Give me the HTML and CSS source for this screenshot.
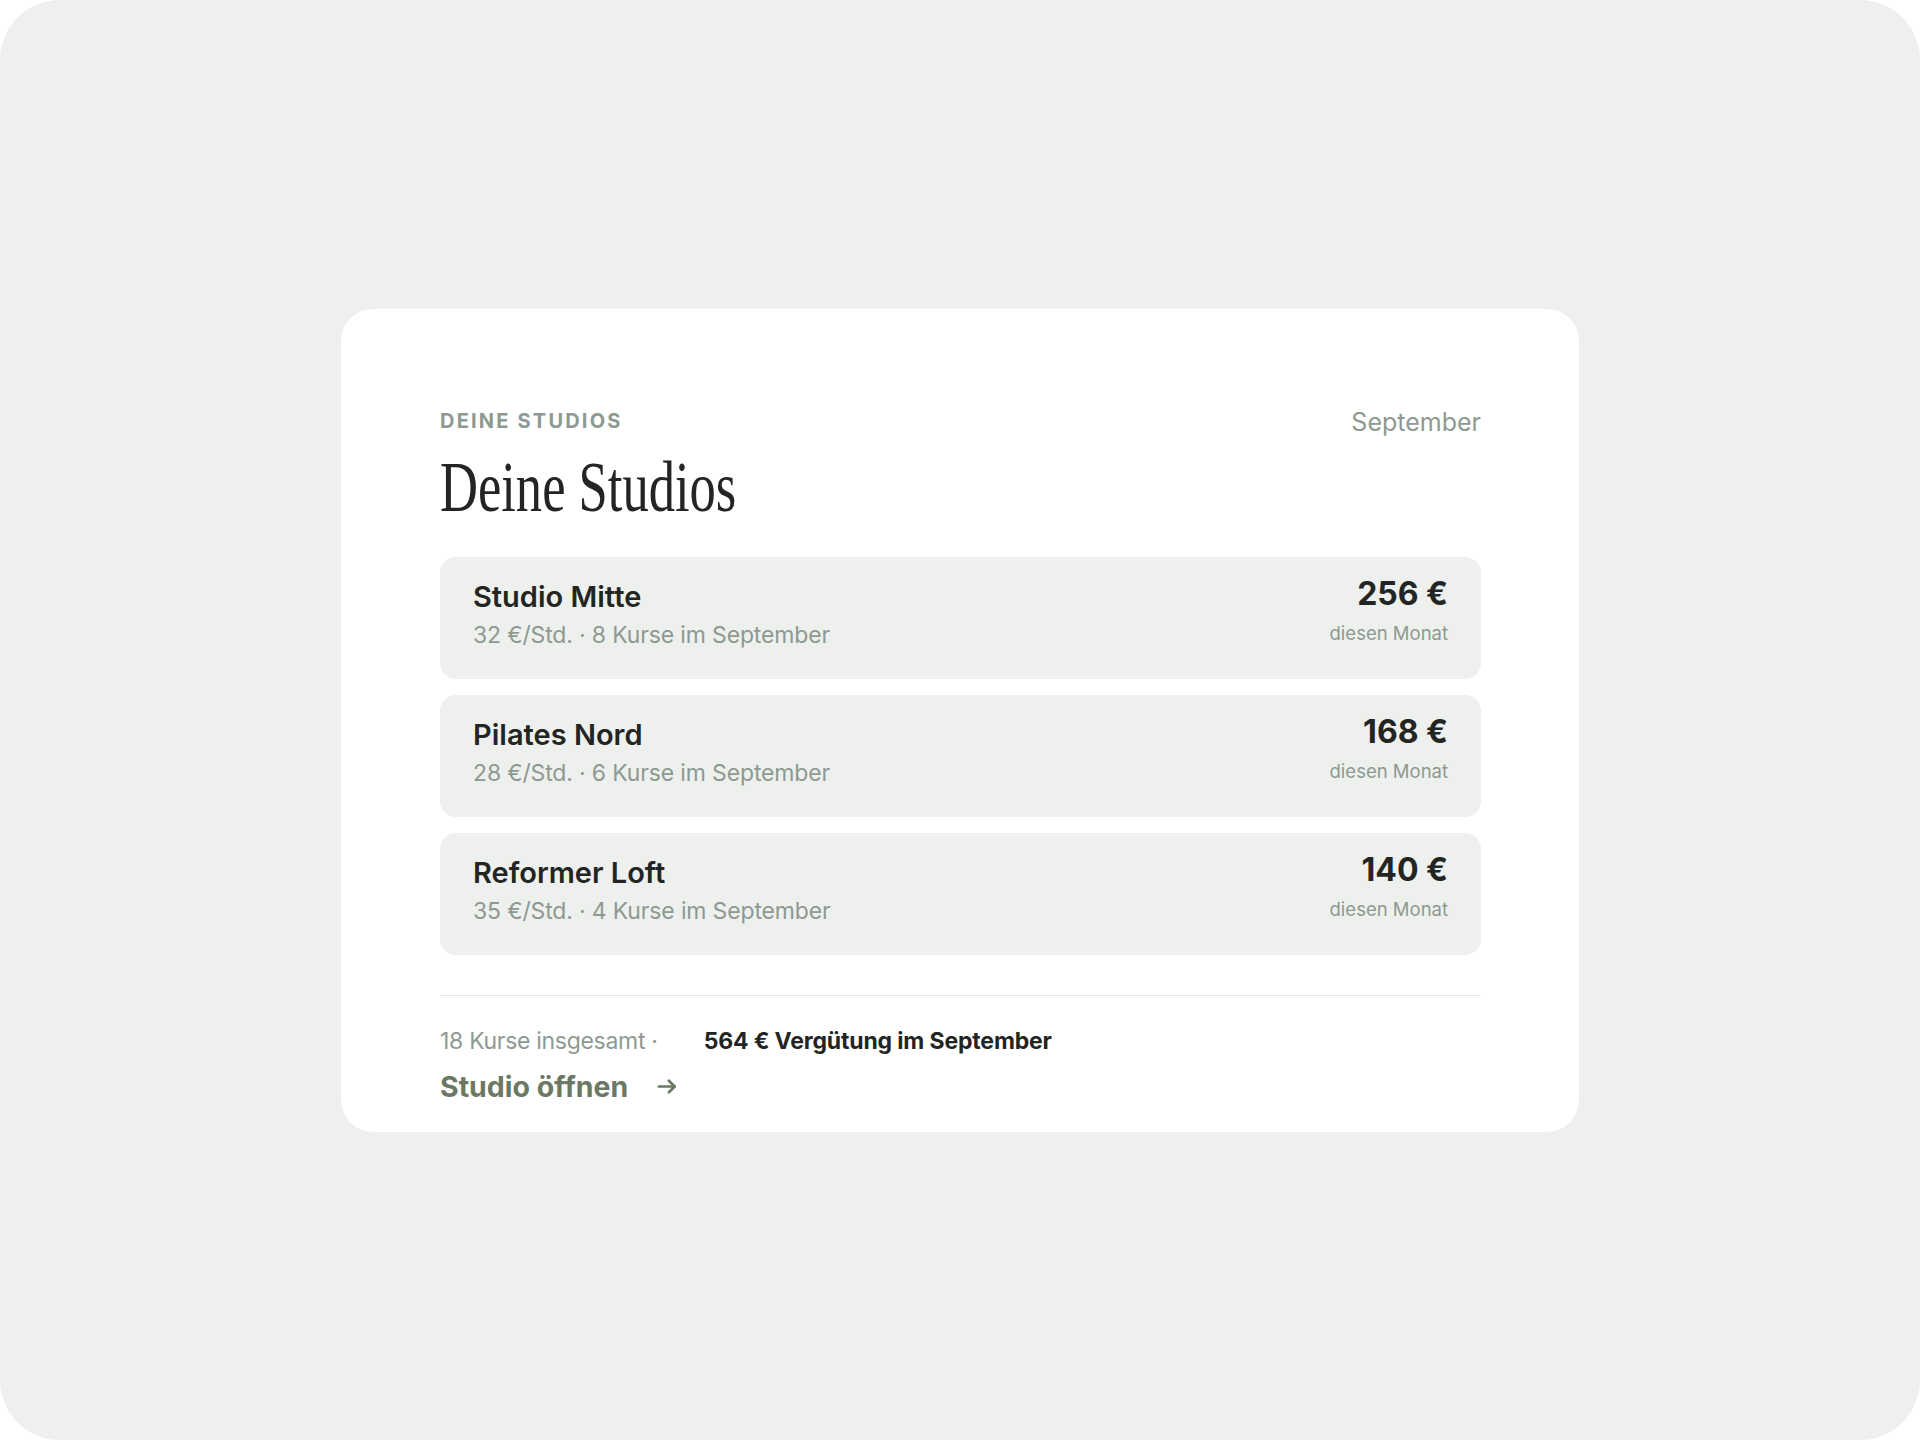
FILE: index.html
```html
<!DOCTYPE html>
<html lang="de">
<head>
<meta charset="utf-8">
<title>Deine Studios</title>
<link rel="stylesheet" href="styles.css">
</head>
<body>
<div class="frame">
  <section class="card">
    <header class="card-head">
      <div class="eyebrow">DEINE STUDIOS</div>
      <div class="month">September</div>
    </header>
    <h1 class="title">Deine Studios</h1>
    <ul class="studios">
      <li class="studio">
        <div class="studio-info">
          <div class="studio-name">Studio Mitte</div>
          <div class="studio-meta">32 €/Std. · 8 Kurse im September</div>
        </div>
        <div class="studio-sum">
          <div class="studio-amount">256 €</div>
          <div class="studio-period">diesen Monat</div>
        </div>
      </li>
      <li class="studio">
        <div class="studio-info">
          <div class="studio-name">Pilates Nord</div>
          <div class="studio-meta">28 €/Std. · 6 Kurse im September</div>
        </div>
        <div class="studio-sum">
          <div class="studio-amount">168 €</div>
          <div class="studio-period">diesen Monat</div>
        </div>
      </li>
      <li class="studio">
        <div class="studio-info">
          <div class="studio-name">Reformer Loft</div>
          <div class="studio-meta">35 €/Std. · 4 Kurse im September</div>
        </div>
        <div class="studio-sum">
          <div class="studio-amount">140 €</div>
          <div class="studio-period">diesen Monat</div>
        </div>
      </li>
    </ul>
    <footer class="card-foot">
      <div class="totals">
        <span class="totals-count">18 Kurse insgesamt ·</span>
        <span class="totals-pay">564 € Vergütung im September</span>
      </div>
      <a class="open-link" href="#">
        <span>Studio öffnen</span>
        <svg class="arrow" width="21" height="21" viewBox="0 0 20 20" fill="none" stroke="currentColor" stroke-width="2.6" stroke-linecap="round" stroke-linejoin="round"><path d="M1.8 10h15"/><path d="M11.3 4.5l5.5 5.5-5.5 5.5"/></svg>
      </a>
    </footer>
  </section>
</div>
</body>
</html>
```
FILE: styles.css
```css
* { box-sizing: border-box; }

html, body {
  margin: 0;
  padding: 0;
  background: #ffffff;
}

body {
  font-family: Inter, "Noto Sans", sans-serif;
  color: #232523;
}

.frame {
  width: 1920px;
  height: 1440px;
  border-radius: 60px;
  background: #eef0ed;
  display: flex;
  align-items: center;
  justify-content: center;
}

.card {
  width: 1238px;
  background: #ffffff;
  border-radius: 32px;
  padding: 98px 98px 29px 99px;
}

.card-head {
  display: flex;
  justify-content: space-between;
  align-items: flex-start;
}

.eyebrow {
  padding-top: 2px;
  font-size: 20px;
  line-height: 24px;
  font-weight: 700;
  letter-spacing: 0.11em;
  color: #8d9991;
}

.month {
  font-size: 25px;
  line-height: 30px;
  color: #8d9991;
}

.title {
  margin: 10px 0 0;
  font-family: "Liberation Serif", "Times New Roman", serif;
  font-weight: 400;
  font-size: 71px;
  line-height: 80px;
  color: #232523;
  transform: scaleX(0.74);
  transform-origin: left center;
  white-space: nowrap;
}

.studios {
  list-style: none;
  margin: 30px 0 0;
  padding: 0;
  display: flex;
  flex-direction: column;
  gap: 16px;
}

.studio {
  height: 122px;
  background: #eef0ed;
  border-radius: 16px;
  padding: 23px 33px 0 33px;
  display: flex;
  justify-content: space-between;
  align-items: flex-start;
}

.studio-name {
  font-size: 29px;
  line-height: 34px;
  font-weight: 600;
  color: #232523;
}

.studio-meta {
  margin-top: 6px;
  font-size: 23px;
  line-height: 30px;
  letter-spacing: -0.15px;
  color: #8d9991;
}

.studio-sum {
  text-align: right;
}

.studio-amount {
  font-size: 32px;
  line-height: 28px;
  font-weight: 700;
  color: #232523;
  margin-bottom: 14px;
}

.studio-period {
  font-size: 18.5px;
  line-height: 22px;
  color: #8d9991;
}

.card-foot {
  margin-top: 40px;
  border-top: 1px solid #e3e6e2;
  padding-top: 30px;
}

.totals {
  display: flex;
  gap: 46px;
  font-size: 23px;
  line-height: 30px;
}

.totals-count {
  color: #8d9991;
  letter-spacing: -0.3px;
}

.totals-pay {
  font-weight: 700;
  letter-spacing: -0.15px;
  color: #232523;
}

.open-link {
  margin-top: 15px;
  display: flex;
  align-items: center;
  gap: 29px;
  font-size: 28.5px;
  line-height: 32px;
  font-weight: 700;
  color: #6b7964;
  text-decoration: none;
}

.arrow {
  display: block;
}
```
